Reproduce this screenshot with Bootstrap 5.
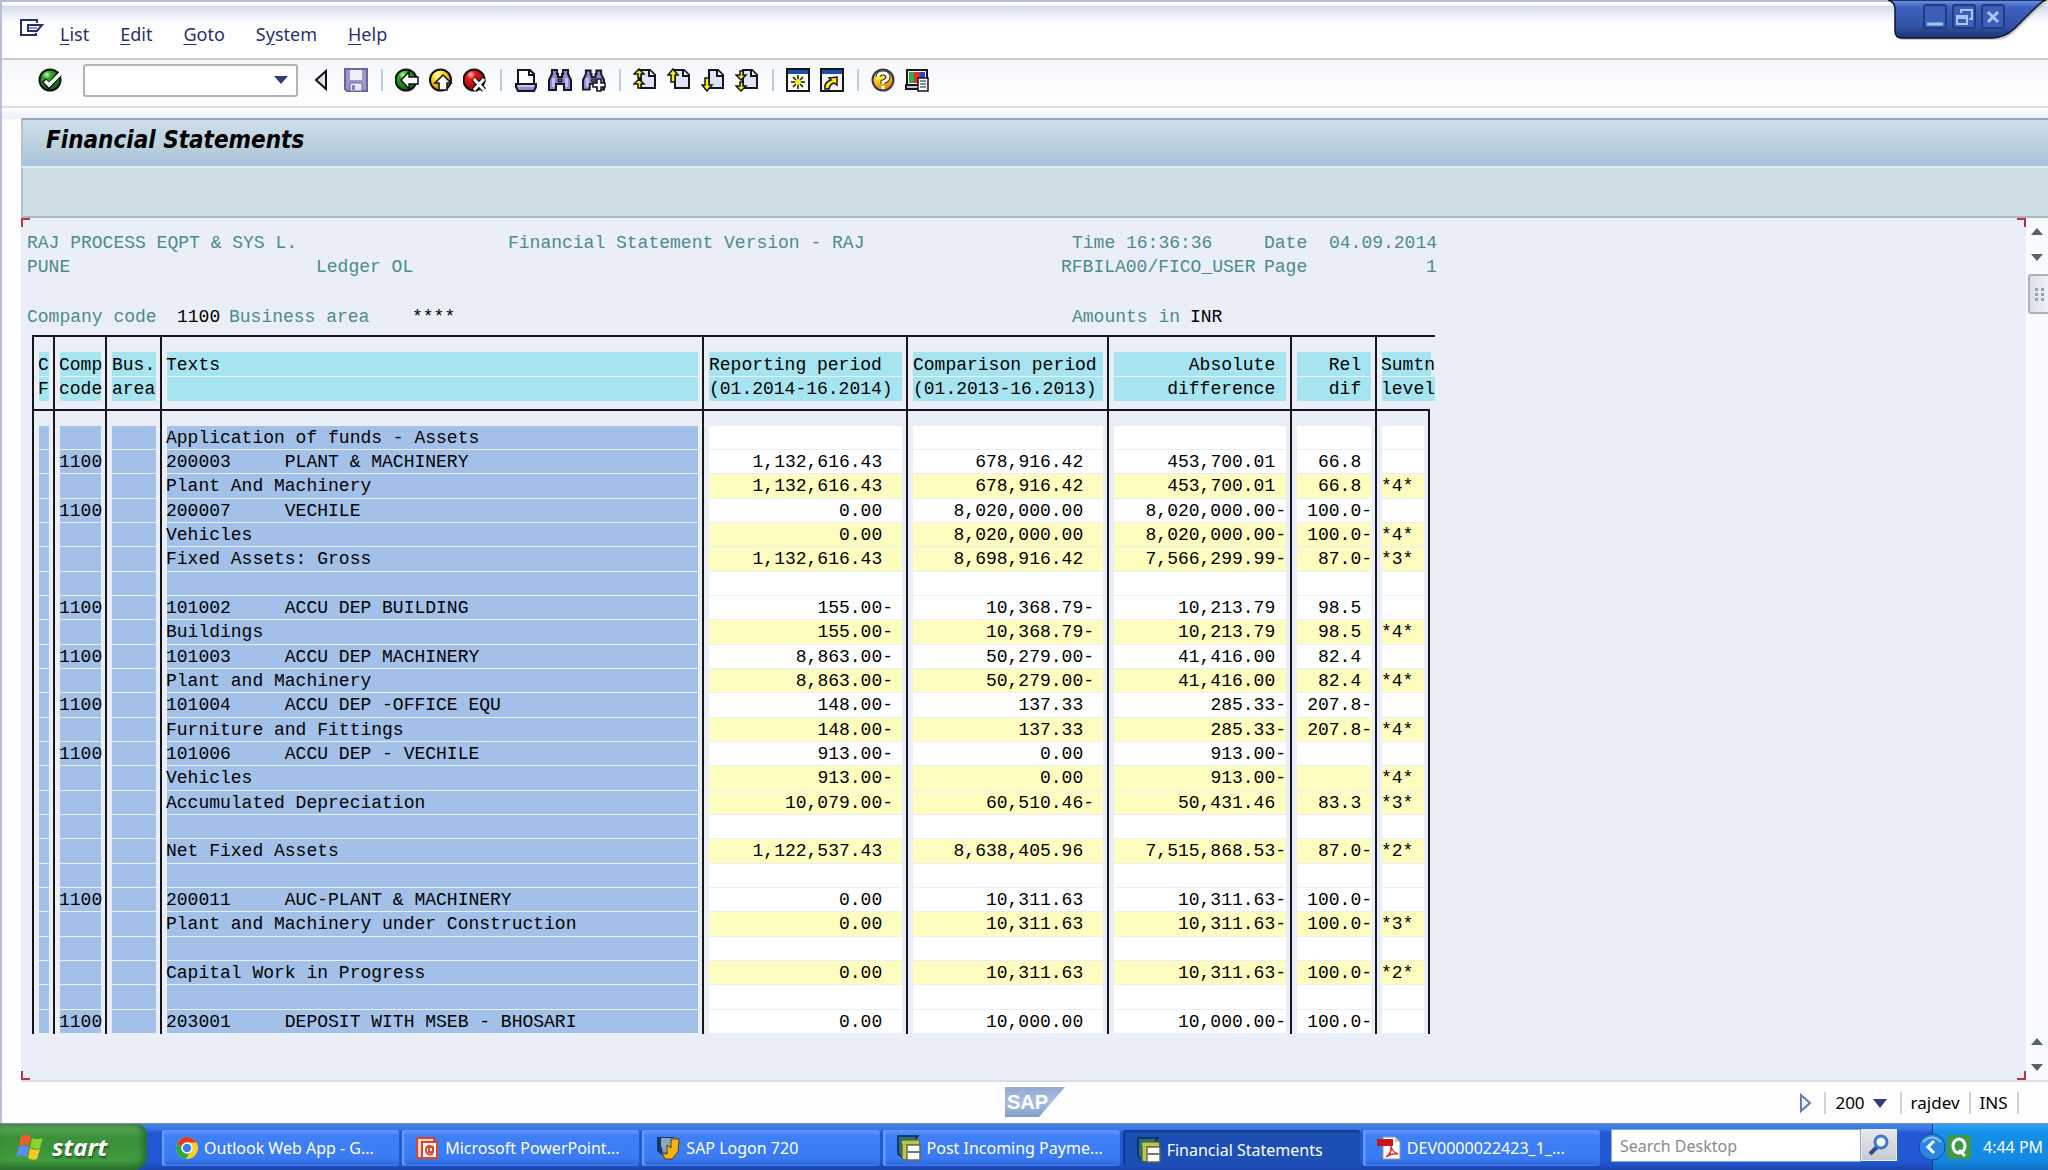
<!DOCTYPE html>
<html lang="en">
<head>
<meta charset="utf-8">
<meta name="viewport" content="width=device-width, initial-scale=1">
<title>Financial Statements</title>
<link href="https://cdn.jsdelivr.net/npm/bootstrap@5.3.0/dist/css/bootstrap.min.css" rel="stylesheet">
<style>
  body{font-family:"Noto Sans",sans-serif;font-size:18px;background:#fdfdfe;color:#000;overflow:hidden}
  button{border:0;background:none;padding:0;color:inherit;font:inherit;line-height:0}
  .sap-window{border-left:2px solid #b9bdd6}
  .menu-strip{height:60px;padding:0 0 4px 18px;border-bottom:2px solid #c9cbd0;border-top:2px solid #b8c0d6;
    background:linear-gradient(#fff 0 3px,#d3daea 4px,#f3f6fb 16px,#fff 24px)}
  .menu-strip nav{gap:31px;margin-left:16px;padding-top:12px}
  .menu-strip a{color:#27306b;text-decoration:none;line-height:26px}
  .menu-strip a u{text-underline-offset:3px}
  .tool-strip{height:48px;padding:0 0 6px 36px;border-bottom:2px solid #dadcdd;background:linear-gradient(#f5f6f9,#fff)}
  .tool-set{gap:10px}
  .tool-strip svg,.pic{display:block}
  .rule-v{width:2px;height:22px;background:#b7cfe2;margin:0 12px 0 13px}
  .cmd-box{width:215px;height:33px;margin:0 16px 0 20px;border:2px solid #b3b3b5;border-radius:3px;background:#fff}
  .cmd-box input{border:0;outline:0;background:none;min-width:0}
  .work{padding:10px 0 0 19px;background:linear-gradient(#fff,#eaf0f8 10px,#fff 12px)}
  .title-band{height:50px;padding-left:23px;border-top:2px solid #98a4be;border-bottom:2px solid #e6eef5;border-left:2px solid #b5c4d4;
    background:linear-gradient(#cfdeeb,#b9cfdc 60%,#a9c1de)}
  .title-band h1{font-family:"DejaVu Sans Condensed","Noto Sans",sans-serif;font-size:24px;font-weight:700;font-style:italic;margin:0;line-height:40px}
  .app-band{height:50px;background:#cedce4;border-bottom:2px solid #a9b8c6;border-left:2px solid #b5c4d4}
  .list-pane{position:relative;padding:13px 0 0 6px;background:#eaeff7;border-bottom:2px solid #d8dce6;overflow:hidden;
    font-family:"Liberation Mono",monospace;line-height:24px}
  .corner{position:absolute;width:9px;height:9px;border:0 solid #b8323f}
  .c-tl{left:0;top:0;border-width:2px 0 0 2px}.c-tr{right:0;top:0;border-width:2px 2px 0 0}
  .c-bl{left:0;bottom:0;border-width:0 0 2px 2px}.c-br{right:0;bottom:0;border-width:0 2px 2px 0}
  .head-line{display:grid;color:#4c8a8c;white-space:pre;height:24px}
  .head-line b{font-weight:400;color:#000}
  .hl-1{grid-template-columns:481px 564px 192px 65px auto}
  .hl-2{grid-template-columns:289px 745px 203px 162px auto;margin-bottom:26px}
  .hl-4{grid-template-columns:150px 52px 183px 660px 118px auto;margin-bottom:6px}
  .fs-list{table-layout:fixed;border-collapse:separate;border-spacing:0;width:1403px;margin-left:5px}
  .fs-list th,.fs-list td{padding:1px 5px 0;font-weight:400;white-space:pre;overflow:hidden;border-left:2px solid #15171c;vertical-align:top;line-height:23px;
    background-image:linear-gradient(var(--tone),var(--tone));background-repeat:no-repeat;background-position:5px 0;background-size:calc(100% - 9px) calc(100% - 1px)}
  .fs-list thead th{--tone:#a6e4f0}
  .fs-list thead tr:first-child th{border-top:2px solid #15171c;padding-top:17px;height:41px;background-position:5px 15px;background-size:calc(100% - 9px) calc(100% - 16px)}
  .fs-list thead tr:last-child th{height:32px;padding-bottom:8px;background-size:calc(100% - 9px) calc(100% - 8px)}
  .fs-list thead th:last-child{padding-right:0;background-size:calc(100% - 5px) calc(100% - 16px)}
  .fs-list thead tr:last-child th:last-child{background-size:calc(100% - 5px) calc(100% - 8px)}
  .fs-list tbody td{--tone:#fff;height:24px}
  .fs-list tbody tr:nth-child(3n) td{height:25px}
  .fs-list tbody tr:first-child td{border-top:2px solid #15171c;padding-top:16px;height:41px;background-position:5px 15px;background-size:calc(100% - 9px) calc(100% - 16px)}
  .fs-list tbody td:nth-child(9){border-right:2px solid #15171c}
  .fs-list tbody tr.total td{--tone:#fefdc0}
  .fs-list tbody tr td.key{--tone:#a3c1e8}
  .fs-list tbody tr.total td.key{--tone:#a3c1e8}
  .fs-list .txt-l{padding-left:4px}
  .fs-list .num-rep{padding-right:13px}.fs-list .num-cmp{padding-right:13px}.fs-list .num-abs{padding-right:4px}.fs-list .num-rel{padding-right:3px}
  .scroll-rail{width:22px;background:#f9fafd;border-bottom:2px solid #d8dce6}
  .scroll-rail button{height:26px;width:22px}
  .thumb{height:40px;margin:4px 0 0 2px;border:2px solid #a9b2be;border-right:0;border-radius:3px 0 0 3px;background:linear-gradient(90deg,#dbe1e9,#eef1f6)}
  .status-strip{height:41px;padding-right:25px;background:#fdfdfe;font-size:17px}
  .status-strip .cell{border-left:2px solid #cfd2d6;padding:0 9px;line-height:22px}
  .logo-slot{left:1003px;top:5px}
  .task-strip{height:47px;background:linear-gradient(#3f86e6 0,#3a77e2 5px,#2459d2 9px,#2158d4 38px,#1a45ac);border-top:1px solid #7b8ba9;color:#fff;font-size:16px}
  .start-btn{width:147px;padding-left:16px;gap:8px;border-radius:0 10px 14px 0;background:linear-gradient(#5f9d5f,#4fa24d 6px,#3b8f3a 14px,#3f9c3d 36px,#2b742b);
    box-shadow:inset -4px 0 6px #2a6c2c;font-size:24px;font-weight:700;font-style:italic;line-height:30px;text-shadow:1px 2px 2px #245524}
  .tasks{padding:6px 11px 4px 15px;gap:3px}
  .task-btn{flex:1 1 0;min-width:0;padding-left:14px;gap:6px;border-radius:3px;line-height:22px;white-space:nowrap;background:linear-gradient(#5b97f8,#3f80f6 6px,#3a7bf2 28px,#2f68dc);box-shadow:inset 2px 0 2px #6ea2fb}
  .task-btn.on{background:#1c4eb4;box-shadow:inset 2px 2px 2px #123a8e;padding-top:3px}
  .find-box{width:250px;height:33px;margin-top:5px;border:1px solid #8fa4c8;background:#fff;font-size:16px;padding:0 8px;border-radius:0;outline:0;color:#333}
  .find-box::placeholder{color:#8a8a8c;opacity:1}
  .find-go{width:36px;height:32px;margin-top:5px;background:linear-gradient(#e6e8eb,#c7cacf);border:1px solid #eee}
  .tray{width:116px;margin-left:35px;padding-left:14px;gap:12px;background:linear-gradient(#36a5f2,#1390e8 8px,#1388e2 36px,#0d6fc4);border-left:1px solid #123b93}
  .tray-toggle{left:-15px;top:9px}
  .win-ctl{right:0;top:0;z-index:3}
  .win-ctl .hit{right:43px;top:4px;gap:5px}
  .win-ctl .hit button{width:24px;height:25px;border:2px solid #1d3c86;border-radius:3px;background:#3b5fb4}
</style>
<script src="https://cdn.jsdelivr.net/npm/bootstrap@5.3.0/dist/js/bootstrap.bundle.min.js"></script>
</head>
<body class="d-flex flex-column vh-100">

<svg width="0" height="0" class="position-absolute" aria-hidden="true">
  <defs>
    <radialGradient id="gGreen" cx=".35" cy=".25" r=".8"><stop offset="0" stop-color="#c8f5c0"/><stop offset=".25" stop-color="#2fa52a"/><stop offset="1" stop-color="#0d5c10"/></radialGradient>
    <radialGradient id="gYellow" cx=".35" cy=".25" r=".8"><stop offset="0" stop-color="#fffbd8"/><stop offset=".3" stop-color="#fbe01c"/><stop offset="1" stop-color="#d87a00"/></radialGradient>
    <radialGradient id="gRed" cx=".35" cy=".25" r=".8"><stop offset="0" stop-color="#ffd0c8"/><stop offset=".25" stop-color="#e61b1b"/><stop offset="1" stop-color="#8c0505"/></radialGradient>
    <linearGradient id="gTab" x2="0" y2="1"><stop offset="0" stop-color="#6c93ea"/><stop offset=".2" stop-color="#3c62bd"/><stop offset=".7" stop-color="#3152a6"/><stop offset="1" stop-color="#1d3570"/></linearGradient>
    <linearGradient id="gSap" x2="0" y2="1"><stop offset="0" stop-color="#92a9d0"/><stop offset=".5" stop-color="#a9bfde"/><stop offset="1" stop-color="#7f9cc8"/></linearGradient>
    <symbol id="sheet" viewBox="0 0 24 24"><path d="M8 2h9l5 5v13H8z" fill="#dfe3fa" stroke="#15151f" stroke-width="2"/><path d="M16 2v6h6" fill="#fff" stroke="#15151f" stroke-width="2"/></symbol>
    <symbol id="glasses" viewBox="0 0 24 24"><path d="M4 2h5v4h1v3h4V6h1V2h5v4l3 6v10h-7v-6h-8v6H1V12l3-6z" fill="#8f8bd0" stroke="#15151f" stroke-width="2"/><path d="M4 10h3v9H4zM17 10h3v9h-3z" fill="#c3c1f0"/><path d="M10 11h4v3h-4z" fill="#55529a" stroke="#15151f"/></symbol>
    <symbol id="sapdoc" viewBox="0 0 24 26"><path d="M1 1h20l-4 5H6v17l-5-4z" fill="#2c6f8a" stroke="#082a4c" stroke-width="1.500"/><path d="M5 5h17v5H10v14H5z" fill="#a9b83a" stroke="#56621a"/><path d="M5 6h17v3H5zM6 10h4v14H6z" fill="#b7c84a"/><path d="M10 10h13v15H10z" fill="#fff" stroke="#6a6a52" stroke-width="1.500"/><path d="M10 17h13" stroke="#777" stroke-width="2"/></symbol>
  </defs>
</svg>

<div class="sap-window flex-grow-1 d-flex flex-column position-relative">
  <header class="menu-strip d-flex align-items-center">
    <button aria-label="Window menu"><svg class="pic" width="24" height="20" viewBox="0 0 24 20" fill="none" stroke="#27306b" stroke-width="2"><path d="M17 5V2H1v15h15v-2"/><path d="M8 7h14l-5 6H8z"/><path d="M8 10h9" stroke-width="1"/></svg></button>
    <nav class="d-flex">
      <a href="#"><u>L</u>ist</a><a href="#"><u>E</u>dit</a><a href="#"><u>G</u>oto</a><a href="#">S<u>y</u>stem</a><a href="#"><u>H</u>elp</a>
    </nav>
  </header>

  <div class="win-ctl position-absolute">
    <svg class="pic" width="160" height="44" viewBox="0 0 160 44"><path d="M2 3q7 2 7 11v20q0 6 6 6h92q12 0 22-10l18-18q8-8 13-8V3z" fill="#9a9a9a" opacity=".5"/><path d="M0 0q7 2 7 9v22q0 7 7 7h90q12 0 22-9l18-18q10-10 14-11z" fill="url(#gTab)" stroke="#0b1530" stroke-width="1.500"/></svg>
    <div class="hit position-absolute d-flex">
      <button aria-label="Minimize"><svg width="20" height="20"><path d="M2 17h16" stroke="#a8c5fb" stroke-width="3"/></svg></button>
      <button aria-label="Restore"><svg width="20" height="20" fill="none" stroke="#a8c5fb" stroke-width="2"><path d="M7 6V3h11v9h-3M3 9h10v8H3zM3 11h10"/></svg></button>
      <button aria-label="Close"><svg width="20" height="20"><path d="M5 5l10 10M15 5L5 15" stroke="#a8c5fb" stroke-width="3"/></svg></button>
    </div>
  </div>

  <div class="tool-strip d-flex align-items-center">
    <button aria-label="Enter"><svg width="25" height="24" viewBox="0 0 25 24"><circle cx="12" cy="12" r="10.500" fill="url(#gGreen)" stroke="#111" stroke-width="2"/><path d="M6 12l5 6L22 5" fill="none" stroke="#111" stroke-width="5.500"/><path d="M7 13l4 4L23 5" fill="none" stroke="#fff" stroke-width="3.500"/></svg></button>
    <div class="cmd-box d-flex align-items-center"><input class="flex-grow-1" type="text" aria-label="Command"><button aria-label="Command history" class="me-2"><svg width="14" height="8"><path d="M0 0h14L7 8z" fill="#2f3d77"/></svg></button></div>
    <button aria-label="Hide command field"><svg width="14" height="22" viewBox="0 0 14 22"><path d="M12 2v18L2 11z" fill="#e4e4e8" stroke="#111" stroke-width="2"/></svg></button>
    <button aria-label="Save" class="ms-3"><svg width="24" height="24" viewBox="0 0 24 24"><path d="M1 1h22v22H3l-2-2z" fill="#9c98cc" stroke="#6b679c" stroke-width="2"/><path d="M6 2h12v10H6z" fill="#eeeefb"/><path d="M6 15h12v8H6z" fill="#e9e9f6" stroke="#6b679c"/><path d="M8 17h3v5H8z" fill="#8682b8"/></svg></button>
    <span class="rule-v"></span>
    <div class="tool-set d-flex">
      <button aria-label="Back"><svg width="24" height="24" viewBox="0 0 24 24"><circle cx="11" cy="12" r="10.500" fill="url(#gGreen)" stroke="#111" stroke-width="2"/><path d="M6 12l8-8v5h9v7h-9v5z" fill="#fff" stroke="#111" stroke-width="1.500"/></svg></button>
      <button aria-label="Exit"><svg width="24" height="24" viewBox="0 0 24 24"><circle cx="11.500" cy="12" r="10.500" fill="url(#gYellow)" stroke="#111" stroke-width="2"/><path d="M14 7l8 8h-4v7h-8v-7H6z" fill="#fff" stroke="#111" stroke-width="1.500"/></svg></button>
      <button aria-label="Cancel"><svg width="24" height="24" viewBox="0 0 24 24"><circle cx="11" cy="12" r="10.500" fill="url(#gRed)" stroke="#111" stroke-width="2"/><path d="M11 11l10 11M21 11L11 22" stroke="#111" stroke-width="5.500"/><path d="M11 11l10 11M21 11L11 22" stroke="#fff" stroke-width="3"/></svg></button>
    </div>
    <span class="rule-v"></span>
    <div class="tool-set d-flex">
      <button aria-label="Print"><svg width="24" height="24" viewBox="0 0 24 24"><path d="M4 16V2h12l4 4v10" fill="#fff" stroke="#15151f" stroke-width="2"/><path d="M15 2v5h5" fill="none" stroke="#15151f" stroke-width="2"/><path d="M2 16h20v3l-2 4H4l-2-4z" fill="#8f8bd0" stroke="#15151f" stroke-width="2"/><path d="M4 18h16" stroke="#dad9f6" stroke-width="1.500"/></svg></button>
      <button aria-label="Find"><svg width="24" height="24"><use href="#glasses"/></svg></button>
      <button aria-label="Find next"><svg width="24" height="24" viewBox="0 0 24 24"><use href="#glasses" width="23" height="24"/><path d="M15 11h4v4h4v4h-4v4h-4v-4h-4v-4h4z" fill="#fff" stroke="#15151f" stroke-width="1.500"/></svg></button>
    </div>
    <span class="rule-v"></span>
    <div class="tool-set d-flex">
      <button aria-label="First page"><svg width="24" height="24" viewBox="0 0 24 24"><use href="#sheet" width="24" height="24"/><path d="M6 1l5 5H8v4H5V6H1zM6 11l5 5H8v4H5v-4H1z" fill="#f6ee1c" stroke="#15151f" stroke-width="1.500"/></svg></button>
      <button aria-label="Previous page"><svg width="24" height="24" viewBox="0 0 24 24"><use href="#sheet" width="24" height="24"/><path d="M6 1l5 6H8v7H4V7H1z" fill="#f6ee1c" stroke="#15151f" stroke-width="1.500"/></svg></button>
      <button aria-label="Next page"><svg width="24" height="24" viewBox="0 0 24 24"><use href="#sheet" width="24" height="24"/><path d="M6 23l5-6H8v-7H4v7H1z" fill="#f6ee1c" stroke="#15151f" stroke-width="1.500"/></svg></button>
      <button aria-label="Last page"><svg width="24" height="24" viewBox="0 0 24 24"><use href="#sheet" width="24" height="24"/><path d="M6 12l5-5H8V3H5v4H1zM6 23l5-5H8v-4H5v4H1z" fill="#f6ee1c" stroke="#15151f" stroke-width="1.500"/></svg></button>
    </div>
    <span class="rule-v"></span>
    <div class="tool-set d-flex">
      <button aria-label="New session"><svg width="24" height="24" viewBox="0 0 24 24"><path d="M1 1h22v22H1z" fill="#fdfde8" stroke="#15151f" stroke-width="2"/><path d="M2 2h20v4H2z" fill="#1c4fa4"/><path d="M12 7v14M5 14h14M7 9l10 10M17 9L7 19" stroke="#15151f" stroke-width="1.500"/><circle cx="12" cy="14" r="3" fill="#f6ee1c"/></svg></button>
      <button aria-label="Create shortcut"><svg width="24" height="24" viewBox="0 0 24 24"><path d="M1 1h22v22H1z" fill="#f4f4f4" stroke="#15151f" stroke-width="2"/><path d="M2 2h20v4H2z" fill="#1c4fa4"/><path d="M5 21q-1-7 6-9l-2-2 8-1v8l-3-2q-4 1-5 6z" fill="#f6ee1c" stroke="#15151f" stroke-width="1.500"/></svg></button>
    </div>
    <span class="rule-v"></span>
    <div class="tool-set d-flex">
      <button aria-label="Help"><svg width="24" height="24" viewBox="0 0 24 24"><circle cx="12" cy="12" r="10.500" fill="url(#gYellow)" stroke="#3a3560" stroke-width="2"/><path d="M7 9q0-4 5-4t5 4q0 3-5 5v2" fill="none" stroke="#3a3015" stroke-width="5"/><path d="M7 9q0-4 5-4t5 4q0 3-5 5v2M12 18v3" fill="none" stroke="#fff" stroke-width="3"/></svg></button>
      <button aria-label="Customize layout"><svg width="24" height="24" viewBox="0 0 24 24"><path d="M2 2h20v15H2z" fill="#fff" stroke="#15151f" stroke-width="2"/><path d="M4 4h5v11H4z" fill="#2fae3c"/><path d="M9 4h6v11H9z" fill="#e03131"/><path d="M15 4h5v11h-5z" fill="#2d3fd0"/><path d="M1 17h20v4H1z" fill="#c8c8d0" stroke="#15151f" stroke-width="2"/><path d="M13 10h10v13H13z" fill="#fff" stroke="#15151f" stroke-width="1.500"/><path d="M15 13h6M15 16h6M15 19h6" stroke="#15151f"/></svg></button>
    </div>
  </div>

  <main class="work flex-grow-1 d-flex flex-column">
    <div class="title-band"><h1>Financial Statements</h1></div>
    <div class="app-band"></div>
    <div class="flex-grow-1 d-flex">
      <section class="list-pane flex-grow-1">
        <i class="corner c-tl"></i><i class="corner c-tr"></i><i class="corner c-bl"></i><i class="corner c-br"></i>
        <div class="head-line hl-1"><span>RAJ PROCESS EQPT &amp; SYS L.</span><span>Financial Statement Version - RAJ</span><span>Time 16:36:36</span><span>Date</span><span>04.09.2014</span></div>
        <div class="head-line hl-2"><span>PUNE</span><span>Ledger OL</span><span>RFBILA00/FICO_USER</span><span>Page</span><span>1</span></div>
        <div class="head-line hl-4"><span>Company code</span><b>1100</b><span>Business area</span><b>****</b><span>Amounts in</span><b>INR</b></div>
        <table class="fs-list">
          <colgroup><col style="width:21px"><col style="width:52px"><col style="width:55px"><col style="width:542px"><col style="width:204px"><col style="width:201px"><col style="width:183px"><col style="width:85px"><col style="width:55px"><col style="width:5px"></colgroup>
          <thead>
            <tr><th class="txt-l">C</th><th class="txt-l">Comp</th><th>Bus.</th><th class="txt-l">Texts</th><th>Reporting period</th><th>Comparison period</th><th class="text-end num-abs">Absolute </th><th class="text-end num-rel">Rel </th><th colspan="2" class="txt-l">Sumtn</th></tr>
            <tr><th class="txt-l">F</th><th class="txt-l">code</th><th>area</th><th></th><th>(01.2014-16.2014)</th><th>(01.2013-16.2013)</th><th class="text-end num-abs">difference </th><th class="text-end num-rel">dif </th><th colspan="2" class="txt-l">level</th></tr>
          </thead>
          <tbody id="rows"></tbody>
        </table>
      </section>
      <div class="scroll-rail d-flex flex-column flex-shrink-0">
        <button aria-label="Scroll up"><svg width="12" height="7"><path d="M0 7h12L6 0z" fill="#55636d"/></svg></button>
        <button aria-label="Scroll down"><svg width="12" height="7"><path d="M0 0h12L6 7z" fill="#55636d"/></svg></button>
        <div class="thumb"><svg width="18" height="36" fill="#98a2ad"><path d="M5 12h3v3H5zM11 12h3v3h-3zM5 17h3v3H5zM11 17h3v3h-3zM5 22h3v3H5zM11 22h3v3h-3z"/></svg></div>
        <button aria-label="Line up" class="mt-auto"><svg width="12" height="7"><path d="M0 7h12L6 0z" fill="#55636d"/></svg></button>
        <button aria-label="Line down"><svg width="12" height="7"><path d="M0 0h12L6 7z" fill="#55636d"/></svg></button>
      </div>
    </div>
  </main>

  <footer class="status-strip d-flex align-items-center justify-content-end position-relative">
    <svg class="logo-slot position-absolute" width="60" height="30" viewBox="0 0 60 30" role="img" aria-label="SAP"><path d="M0 0h60L34 30H0z" fill="url(#gSap)"/><text x="2" y="22" font-family="Liberation Sans, sans-serif" font-weight="700" font-size="20" fill="#fff">SAP</text></svg>
    <button aria-label="Expand status" class="me-2"><svg width="12" height="20" viewBox="0 0 12 20"><path d="M1 2v16l9-8z" fill="#eef4fb" stroke="#5f7fa8" stroke-width="2"/></svg></button>
    <span class="cell ms-1">200<button aria-label="Client list" class="ms-2 me-1"><svg width="14" height="9"><path d="M0 0h14L7 9z" fill="#2f3d77"/></svg></button></span>
    <span class="cell">rajdev</span>
    <span class="cell">INS</span>
    <span class="cell p-0">&nbsp;</span>
  </footer>
</div>

<footer class="task-strip d-flex">
  <button class="start-btn d-flex align-items-center"><svg width="28" height="28" viewBox="0 0 28 28"><path d="M5 3q5-3 10 0l-2 10q-4-3-10 0z" fill="#f0602a"/><path d="M16 5q5 2 11 0l-3 10q-5 2-10-1z" fill="#8fd02a"/><path d="M3 14q5-3 10 0l-2 10q-5-3-11 0z" fill="#5b8df5"/><path d="M14 15q4 3 10 1l-3 10q-5 2-9-1z" fill="#f9c81e"/></svg>start</button>
  <div class="tasks d-flex flex-grow-1">
    <button class="task-btn d-flex align-items-center"><svg width="22" height="22" viewBox="0 0 22 22"><circle cx="11" cy="11" r="11" fill="#fbd02b"/><path d="M1.500 5.500A11 11 0 0 1 20.500 5.500H11L7 13z" fill="#dd3b2e"/><path d="M1.500 5.500A11 11 0 0 0 10 22l5-9-8 0z" fill="#2fa24c"/><circle cx="11" cy="11" r="5" fill="#3c7de0" stroke="#fff" stroke-width="1.500"/></svg>Outlook Web App - G...</button>
    <button class="task-btn d-flex align-items-center"><svg width="23" height="23" viewBox="0 0 23 23"><path d="M1 1h17v20H1z" fill="#f6d4c8" stroke="#d9472b" stroke-width="2"/><path d="M6 5h15v16H6z" fill="#fff" stroke="#d9472b" stroke-width="2"/><path d="M17 10q-7-3-7 3t7 4M13 10h4v5h-4z" fill="none" stroke="#d9472b" stroke-width="2"/></svg>Microsoft PowerPoint...</button>
    <button class="task-btn d-flex align-items-center"><svg width="24" height="24" viewBox="0 0 24 24"><path d="M1 1h17v4H6v14l-5-4z" fill="#13395f"/><path d="M5 2h14l-4 4v10H8L5 10z" fill="#8aa6c0"/><path d="M15 3h8l-1 13-6 7H9l-3-6 5 1V9l4 3z" fill="#f3b414" stroke="#5a3f05"/></svg>SAP Logon 720</button>
    <button class="task-btn d-flex align-items-center"><svg width="24" height="26"><use href="#sapdoc"/></svg>Post Incoming Payme...</button>
    <button class="task-btn on d-flex align-items-center"><svg width="24" height="26"><use href="#sapdoc"/></svg>Financial Statements</button>
    <button class="task-btn d-flex align-items-center"><svg width="24" height="24" viewBox="0 0 24 24"><path d="M6 1h12l5 5v17H6z" fill="#fff" stroke="#999"/><path d="M18 1v5h5" fill="#ccc"/><path d="M0 3h16v7H0z" fill="#c8161b"/><path d="M9 21q6-4 5-11 1 6 7 8-6-1-12 3z" fill="none" stroke="#d9302b" stroke-width="1.500"/></svg>DEV0000022423_1_...</button>
  </div>
  <input class="find-box" type="search" placeholder="Search Desktop" aria-label="Search Desktop">
  <button class="find-go" aria-label="Search"><svg width="24" height="24" viewBox="0 0 24 24" fill="none"><path d="M3 21l7-7" stroke="#2a4f92" stroke-width="4"/><circle cx="14" cy="9" r="6" fill="#f4f8fd" stroke="#3f78c8" stroke-width="3"/></svg></button>
  <div class="tray d-flex align-items-center position-relative">
    <button class="tray-toggle position-absolute" aria-label="Show hidden icons"><svg width="28" height="28" viewBox="0 0 28 28"><circle cx="14" cy="14" r="13" fill="#2b86e0" stroke="#0f4ba0"/><path d="M5 9q9-9 18 0" fill="none" stroke="#8cc6fb" stroke-width="2"/><path d="M16 8l-6 6 6 6" fill="none" stroke="#fff" stroke-width="3"/></svg></button>
    <svg width="24" height="24" viewBox="0 0 24 24" class="flex-shrink-0"><rect width="24" height="24" rx="3" fill="#3f9a45"/><ellipse cx="12" cy="11" rx="6" ry="7" fill="none" stroke="#fff" stroke-width="3"/><path d="M12 15l6 6" stroke="#fff" stroke-width="3"/></svg>
    <span class="text-nowrap">4:44 PM</span>
  </div>
</footer>

<script>
  // One entry per list line: company code, text, reporting, comparison, absolute, relative, summation level
  const lines = [
    ['', 'Application of funds - Assets'],
    ['1100', '200003     PLANT & MACHINERY', '1,132,616.43', '678,916.42', '453,700.01', '66.8'],
    ['', 'Plant And Machinery', '1,132,616.43', '678,916.42', '453,700.01', '66.8', '*4*'],
    ['1100', '200007     VECHILE', '0.00', '8,020,000.00', '8,020,000.00-', '100.0-'],
    ['', 'Vehicles', '0.00', '8,020,000.00', '8,020,000.00-', '100.0-', '*4*'],
    ['', 'Fixed Assets: Gross', '1,132,616.43', '8,698,916.42', '7,566,299.99-', '87.0-', '*3*'],
    [],
    ['1100', '101002     ACCU DEP BUILDING', '155.00-', '10,368.79-', '10,213.79', '98.5'],
    ['', 'Buildings', '155.00-', '10,368.79-', '10,213.79', '98.5', '*4*'],
    ['1100', '101003     ACCU DEP MACHINERY', '8,863.00-', '50,279.00-', '41,416.00', '82.4'],
    ['', 'Plant and Machinery', '8,863.00-', '50,279.00-', '41,416.00', '82.4', '*4*'],
    ['1100', '101004     ACCU DEP -OFFICE EQU', '148.00-', '137.33', '285.33-', '207.8-'],
    ['', 'Furniture and Fittings', '148.00-', '137.33', '285.33-', '207.8-', '*4*'],
    ['1100', '101006     ACCU DEP - VECHILE', '913.00-', '0.00', '913.00-', ''],
    ['', 'Vehicles', '913.00-', '0.00', '913.00-', '', '*4*'],
    ['', 'Accumulated Depreciation', '10,079.00-', '60,510.46-', '50,431.46', '83.3', '*3*'],
    [],
    ['', 'Net Fixed Assets', '1,122,537.43', '8,638,405.96', '7,515,868.53-', '87.0-', '*2*'],
    [],
    ['1100', '200011     AUC-PLANT & MACHINERY', '0.00', '10,311.63', '10,311.63-', '100.0-'],
    ['', 'Plant and Machinery under Construction', '0.00', '10,311.63', '10,311.63-', '100.0-', '*3*'],
    [],
    ['', 'Capital Work in Progress', '0.00', '10,311.63', '10,311.63-', '100.0-', '*2*'],
    [],
    ['1100', '203001     DEPOSIT WITH MSEB - BHOSARI', '0.00', '10,000.00', '10,000.00-', '100.0-']
  ];
  // A positive amount keeps an empty slot where the trailing minus would stand
  const amount = v => !v ? '' : v.endsWith('-') ? v : v + ' ';
  const body = document.getElementById('rows');
  for (const [code = '', text = '', rep, cmp, abs, rel, level = ''] of lines) {
    const tr = body.insertRow();
    if (level) tr.className = 'total';
    const cells = [
      ['', 'key'], [code, 'key txt-l'], ['', 'key'], [text, 'key txt-l'],
      [amount(rep), 'text-end num-rep'], [amount(cmp), 'text-end num-cmp'],
      [amount(abs), 'text-end num-abs'], [amount(rel), 'text-end num-rel'], [level, 'txt-l']
    ];
    for (const [value, cls] of cells) {
      const td = tr.insertCell();
      td.textContent = value;
      td.className = cls;
    }
  }
</script>
</body>
</html>
